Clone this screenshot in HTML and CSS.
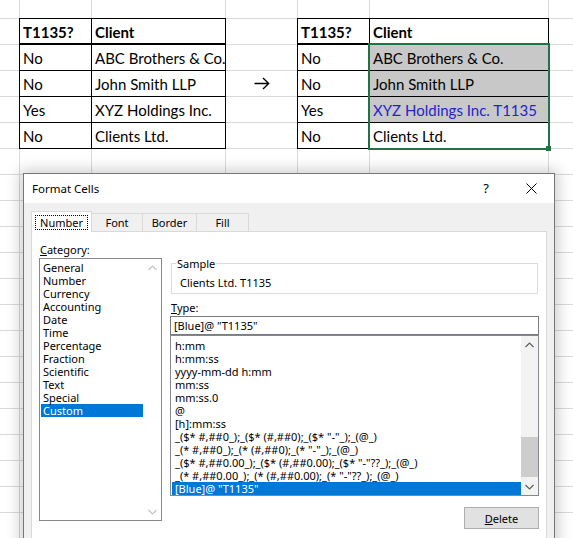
FILE: index.html
```html
<!DOCTYPE html>
<html>
<head>
<meta charset="utf-8">
<title>Format Cells</title>
<link rel="stylesheet" href="styles.css">
</head>
<body>
<div class="sheet">
  <div class="tables">
    <div class="xtable left">
      <div class="c h">T1135?</div><div class="c h">Client</div>
      <div class="c">No</div><div class="c">ABC Brothers &amp; Co.</div>
      <div class="c">No</div><div class="c">John Smith LLP</div>
      <div class="c">Yes</div><div class="c">XYZ Holdings Inc.</div>
      <div class="c">No</div><div class="c">Clients Ltd.</div>
    </div>
    <div class="arrow-cell">
      <svg width="16" height="13" viewBox="0 0 16 13"><path d="M0.5 6.5H15M9 1L14.7 6.5L9 12" fill="none" stroke="#000" stroke-width="1.4"/></svg>
    </div>
    <div class="xtable right">
      <div class="c h">T1135?</div><div class="c h">Client</div>
      <div class="c">No</div><div class="c sel">ABC Brothers &amp; Co.</div>
      <div class="c">No</div><div class="c sel">John Smith LLP</div>
      <div class="c">Yes</div><div class="c sel blue">XYZ Holdings Inc. T1135</div>
      <div class="c">No</div><div class="c">Clients Ltd.</div>
      <div class="selection"><span class="handle"></span></div>
    </div>
  </div>

  <div class="dialog">
    <div class="titlebar">
      <span class="title">Format Cells</span>
      <span class="help">?</span>
      <span class="close"><svg width="11" height="11" viewBox="0 0 11 11"><path d="M0.5 0.5L10.5 10.5M10.5 0.5L0.5 10.5" stroke="#000" stroke-width="1"/></svg></span>
    </div>
    <div class="dbody">
      <div class="tabs">
        <div class="tab active w-number"><span class="focus">Number</span></div>
        <div class="tab w-font">Font</div>
        <div class="tab w-border">Border</div>
        <div class="tab w-fill">Fill</div>
      </div>
      <div class="panel">
        <div class="leftcol">
          <div class="label"><u>C</u>ategory:</div>
          <div class="listbox catlist">
            <div class="items cat-items">
              <div class="item">General</div>
              <div class="item">Number</div>
              <div class="item">Currency</div>
              <div class="item">Accounting</div>
              <div class="item">Date</div>
              <div class="item">Time</div>
              <div class="item">Percentage</div>
              <div class="item">Fraction</div>
              <div class="item">Scientific</div>
              <div class="item">Text</div>
              <div class="item">Special</div>
              <div class="item selected">Custom</div>
            </div>
            <div class="scrollbar disabled">
              <div class="sbtn"><svg width="9" height="6" viewBox="0 0 9 6"><path d="M0.5 5L4.5 1L8.5 5" fill="none" stroke="#c3c3c3" stroke-width="1.2"/></svg></div>
              <div class="track"></div>
              <div class="sbtn"><svg width="9" height="6" viewBox="0 0 9 6"><path d="M0.5 1L4.5 5L8.5 1" fill="none" stroke="#c3c3c3" stroke-width="1.2"/></svg></div>
            </div>
          </div>
        </div>
        <div class="rightcol">
          <fieldset class="sample">
            <legend>Sample</legend>
            <div class="sample-text">Clients Ltd. T1135</div>
          </fieldset>
          <div class="label type-label"><u>T</u>ype:</div>
          <div class="input">[Blue]@ "T1135"</div>
          <div class="listbox typelist">
            <div class="items type-items">
              <div class="item">h:mm</div>
              <div class="item">h:mm:ss</div>
              <div class="item">yyyy-mm-dd h:mm</div>
              <div class="item">mm:ss</div>
              <div class="item">mm:ss.0</div>
              <div class="item">@</div>
              <div class="item">[h]:mm:ss</div>
              <div class="item">_($* #,##0_);_($* (#,##0);_($* "-"_);_(@_)</div>
              <div class="item">_(* #,##0_);_(* (#,##0);_(* "-"_);_(@_)</div>
              <div class="item">_($* #,##0.00_);_($* (#,##0.00);_($* "-"??_);_(@_)</div>
              <div class="item">_(* #,##0.00_);_(* (#,##0.00);_(* "-"??_);_(@_)</div>
              <div class="item selected">[Blue]@ "T1135"</div>
            </div>
            <div class="scrollbar">
              <div class="sbtn"><svg width="9" height="6" viewBox="0 0 9 6"><path d="M0.5 5L4.5 1L8.5 5" fill="none" stroke="#606060" stroke-width="1.2"/></svg></div>
              <div class="track"><div class="thumb"></div></div>
              <div class="sbtn"><svg width="9" height="6" viewBox="0 0 9 6"><path d="M0.5 1L4.5 5L8.5 1" fill="none" stroke="#606060" stroke-width="1.2"/></svg></div>
            </div>
          </div>
          <button class="btn"><u>D</u>elete</button>
        </div>
      </div>
    </div>
  </div>
</div>
</body>
</html>
```

FILE: styles.css
```css
html, body {
  margin: 0;
  padding: 0;
  overflow: hidden;
  background: #fff;
}

.sheet {
  position: relative;
  width: 573px;
  height: 538px;
  overflow: hidden;
  background-color: #fff;
  background-image:
    linear-gradient(#dadada, #dadada),
    linear-gradient(#dadada, #dadada),
    linear-gradient(#dadada, #dadada),
    linear-gradient(#dadada, #dadada),
    linear-gradient(#dadada, #dadada),
    linear-gradient(#dadada, #dadada),
    linear-gradient(to bottom, #dadada 0, #dadada 1px, transparent 1px);
  background-repeat: no-repeat, no-repeat, no-repeat, no-repeat, no-repeat, no-repeat, repeat;
  background-size: 1px 100%, 1px 100%, 1px 100%, 1px 100%, 1px 100%, 1px 100%, 100% 26px;
  background-position: 19px 0, 91px 0, 225px 0, 297px 0, 369px 0, 548px 0, 0 18px;
}

/* ---------- spreadsheet tables ---------- */
.tables {
  display: flex;
  align-items: flex-start;
  padding: 18px 0 0 19px;
}

.xtable {
  display: grid;
  gap: 1px;
  padding: 1px;
  background: #000;
  grid-auto-rows: 25px;
  font-family: Lato, "Liberation Sans", sans-serif;
  font-size: 15px;
  color: #000;
}

.xtable.left { grid-template-columns: 71px 133px; }
.xtable.right { grid-template-columns: 71px 178px; position: relative; }

.c {
  box-sizing: border-box;
  background: #fff;
  display: flex;
  align-items: flex-end;
  padding: 0 0 3px 3px;
  line-height: 18px;
  white-space: nowrap;
  overflow: hidden;
}

.c.h {
  font-weight: 700;
  border-bottom: 1px solid #000;
  padding-bottom: 2px;
}

.c.sel { background: #c8c8c8; }
.c.blue { color: #2424c8; }

.arrow-cell {
  width: 71px;
  height: 26px;
  margin-top: 52px;
  display: flex;
  align-items: center;
  justify-content: center;
}

.selection {
  position: absolute;
  left: 71px;
  top: 25px;
  width: 182px;
  height: 107px;
  box-sizing: border-box;
  border: 2px solid #217346;
}

.handle {
  position: absolute;
  right: -3px;
  bottom: -3px;
  width: 5px;
  height: 5px;
  background: #217346;
}

/* ---------- dialog ---------- */
.dialog {
  position: absolute;
  left: 23px;
  top: 173px;
  width: 532px;
  height: 420px;
  box-sizing: border-box;
  border: 1px solid #777;
  background: #f0f0f0;
  box-shadow: 0 0 14px 3px rgba(0, 0, 0, 0.2);
  font-family: "Noto Sans", "Open Sans", sans-serif;
  font-size: 11px;
  line-height: 13px;
  color: #000;
}

.titlebar {
  height: 29px;
  background: #fff;
  display: flex;
  align-items: center;
}

.title {
  flex: 1;
  padding-left: 8px;
  font-size: 11.5px;
}

.help {
  width: 44px;
  text-align: center;
  font-size: 13px;
}

.close {
  width: 46px;
  display: flex;
  justify-content: center;
  align-items: center;
}

.close svg { display: block; }

.dbody {
  padding: 8px 7px 0 7px;
}

.tabs {
  display: flex;
  align-items: flex-end;
  height: 20px;
}

.tab {
  box-sizing: border-box;
  height: 18px;
  border: 1px solid #d9d9d9;
  border-bottom: none;
  background: #f0f0f0;
  display: flex;
  align-items: center;
  justify-content: center;
  margin-left: -1px;
}

.tab.active {
  height: 21px;
  margin-bottom: -1px;
  margin-left: 0;
  background: #fff;
  position: relative;
  z-index: 1;
}

.w-number { width: 61px; }
.w-font { width: 52px; }
.w-border { width: 55px; }
.w-fill { width: 53px; }

.focus {
  border: 1px dotted #000;
  padding: 0 4px;
  line-height: 13px;
}

.panel {
  height: 330px;
  box-sizing: border-box;
  background: #fff;
  border: 1px solid #d9d9d9;
  display: flex;
  gap: 8px;
  padding: 11px 7px 0 7px;
}

.leftcol {
  width: 123px;
  display: flex;
  flex-direction: column;
}

.rightcol {
  flex: 1;
  display: flex;
  flex-direction: column;
}

.label {
  padding-left: 1px;
  height: 13px;
}

.label u, .btn u { text-decoration: underline; text-underline-offset: 1px; }

.listbox {
  box-sizing: border-box;
  border: 1px solid #828790;
  background: #fff;
  display: flex;
  overflow: hidden;
}

.catlist {
  margin-top: 2px;
  height: 263px;
}

.items {
  flex: 1;
  min-width: 0;
}

.cat-items { padding-top: 2px; }
.type-items { padding-top: 3px; }

.item {
  height: 13px;
  white-space: nowrap;
  margin-left: 1px;
}

.cat-items .item { padding-left: 2px; margin-right: 1px; }
.type-items .item { padding-left: 3px; }

.item.selected {
  background: #0078d7;
  color: #fff;
}

.scrollbar {
  width: 17px;
  flex: none;
  display: flex;
  flex-direction: column;
  background: #f3f3f3;
  position: relative;
  z-index: 1;
}

.scrollbar.disabled { background: #fff; }

.sbtn {
  height: 17px;
  display: flex;
  align-items: center;
  justify-content: center;
}

.sbtn svg { display: block; }

.track {
  flex: 1;
  display: flex;
  flex-direction: column;
  justify-content: flex-end;
  padding-bottom: 1px;
}

.thumb {
  height: 40px;
  background: #cdcdcd;
}

.sample {
  margin: 14px 1px 0 1px;
  padding: 6px 8px 4px 8px;
  border: 1px solid #dcdcdc;
  min-width: 0;
}

.sample legend {
  padding: 0 1px;
  margin-left: -4px;
  line-height: 13px;
}

.sample-text { height: 13px; }

.type-label { margin-top: 7px; }

.input {
  margin-top: 2px;
  height: 19px;
  box-sizing: border-box;
  border: 1px solid #7a7a7a;
  padding-left: 3px;
  line-height: 17px;
  white-space: nowrap;
}

.typelist {
  height: 161px;
}

.btn {
  align-self: flex-end;
  margin-top: 11px;
  width: 75px;
  height: 22px;
  box-sizing: border-box;
  border: 1px solid #adadad;
  background: #e1e1e1;
  font-family: "Noto Sans", "Open Sans", sans-serif;
  font-size: 11px;
  color: #000;
  padding: 0;
}
```
